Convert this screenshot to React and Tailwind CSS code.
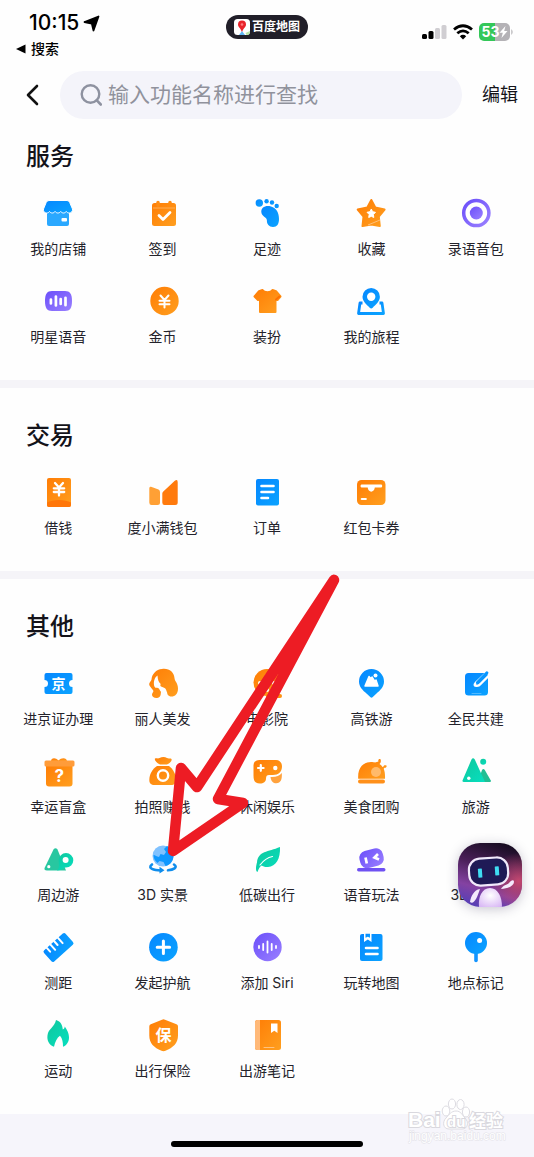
import React, { useState } from 'react'

/* ═══════════════════════════ Icons ═══════════════════════════ */
/* every drawing lives on a 32x32 grid and shares four gradients */
const OR = 'url(#gOrange)'
const BL = 'url(#gBlue)'
const PU = 'url(#gPurple)'
const GR = 'url(#gGreen)'

const line = { fill: 'none', strokeLinecap: 'round', strokeLinejoin: 'round' }

function Gradients() {
  const stops = [
    ['gOrange', '#ff7d05', '#ff9f1f'],
    ['gBlue', '#0587ff', '#0ba3ff'],
    ['gPurple', '#6b4ffa', '#9a80ff'],
    ['gGreen', '#10c79d', '#06dfbf'],
  ]
  return (
    <svg width="0" height="0" className="absolute" aria-hidden="true">
      <defs>
        {stops.map(([id, from, to]) => (
          <linearGradient key={id} id={id} x1="0" y1="0" x2="1" y2="1">
            <stop offset="0" stopColor={from} />
            <stop offset="1" stopColor={to} />
          </linearGradient>
        ))}
      </defs>
    </svg>
  )
}

const Glyph = ({ x, y, size, children }) => (
  <text x={x} y={y} fontSize={size} fontWeight="700" fill="#fff" textAnchor="middle">{children}</text>
)

const icons = {
  store: (
    <>
      <path fill="#2aa8ff" d="M5 14h22v13a2 2 0 0 1-2 2H7a2 2 0 0 1-2-2z" />
      <path fill={BL} stroke="#fff" strokeWidth="1" d="M7 3.500h18q2 0 2.700 2L30.500 12c.5 2.500-1.500 4-3.200 4-1.500 0-2.300-.6-3-1.500-1.600 2-4 2-5.600 0-1.600 2-4 2-5.600 0-1.600 2-4 2-5.600 0-.8 1-1.600 1.500-3 1.500C2.500 16 1 14.500 1.500 12l2.700-6.500q.8-2 2.800-2z" />
      <rect x="19.500" y="21" width="5.500" height="3.500" rx="1" fill="#fff" />
    </>
  ),
  calendar: (
    <>
      <rect x="5" y="6" width="24" height="23" rx="2.500" fill={OR} />
      <path d="M11 5.500v3M23 5.500v3" stroke="#ff8c12" strokeWidth="3.500" {...line} />
      <path d="M6 11h22" stroke="#ffad55" strokeWidth="1" />
      <path d="M12 18.500l4 4 7-7" stroke="#fff" strokeWidth="2.800" {...line} />
    </>
  ),
  foot: (
    <g fill={BL}>
      <circle cx="8.300" cy="6" r="3.700" />
      <circle cx="15.600" cy="4.200" r="2.200" />
      <circle cx="21" cy="5.500" r="2.200" />
      <circle cx="25.700" cy="9" r="2.200" />
      <path d="M10.300 15C10 10.500 14.500 8 20 9.500S28 16 28 22c0 5-2 8-6 8s-6.300-3-6.100-6.500C16 20 10.500 19.500 10.300 15z" />
    </g>
  ),
  star: (
    <>
      <path fill={OR} stroke={OR} strokeWidth="2" strokeLinejoin="round" d="M16.300 3l4 7.500 9.300 2-5.800 7 1 9.500-8.500-1.500L7.500 29l1-9.500-5.800-7 9.600-2z" />
      <path d="M13 28l12-5" stroke="#ffc07a" strokeWidth="1" />
      <path fill="#fff" stroke="#fff" strokeLinejoin="round" d="M16.300 12l1.300 2.700 2.900.6-2.100 2.200.4 3-2.500-1.200-2.600 1.200.5-3-2.200-2.200 3-.6z" />
    </>
  ),
  record: (
    <>
      <circle cx="16.300" cy="16" r="12.600" fill="none" stroke={PU} strokeWidth="3.500" />
      <circle cx="16.300" cy="16" r="6.500" fill={PU} />
    </>
  ),
  voice: (
    <>
      <path fill={PU} d="M10 6h13c5 0 7 3 7 10s-2 10-7 10H10c-5 0-7-3-7-10S5 6 10 6z" />
      <path d="M8.900 14.500v4M13.900 11.500v9M18.700 14v5M23.500 12.800v7.400" stroke="#fff" strokeWidth="2.700" {...line} />
    </>
  ),
  coin: (
    <>
      <circle cx="17.500" cy="16" r="14.200" fill={OR} />
      <path d="M13.500 10.500l4 4.500 4-4.500M12.500 15.800h10M12.500 19.300h10M17.500 15v7.500" stroke="#fff" strokeWidth="2" {...line} />
    </>
  ),
  shirt: (
    <>
      <path fill={OR} stroke={OR} strokeWidth="2" strokeLinejoin="round" d="M11.500 5c1.500 3 8.500 3 10 0l3.500 1.200 4.500 5.300-3 3.500-2-1V27H9V14l-2 1-3.500-3.500L8 6.200z" />
      <path d="M25 14.500l3.500-3" stroke="#ff6f00" strokeWidth="2" {...line} />
    </>
  ),
  trip: (
    <>
      <path fill="none" stroke={BL} strokeWidth="2.800" strokeLinejoin="round" d="M7.500 18H5L3.500 28.500h25L27 18h-2.500" />
      <path fill={BL} d="M16.200 3a8.700 8.700 0 0 0-8.700 8.700c0 4.800 4.500 8 7.200 11q1.500 1.500 3 0c2.700-3 7.200-6.200 7.200-11A8.700 8.700 0 0 0 16.200 3z" />
      <circle cx="16.200" cy="11.700" r="4.200" fill="#fff" />
    </>
  ),
  loan: (
    <>
      <rect x="5" y="2" width="24" height="29" rx="2" fill={OR} />
      <path fill="#ff7608" d="M5 26.500c6-3.500 18-3.500 24 0V29a2 2 0 0 1-2 2H7a2 2 0 0 1-2-2z" />
      <path d="M13 7l4 4.500L21 7M11.800 12.300h10.400M11.800 16h10.400M17 11.500v8" stroke="#fff" strokeWidth="2.300" {...line} />
    </>
  ),
  wallet: (
    <>
      <path fill="#ffa035" d="M4 10.800l7.500 2.700Q13 14 13 16v10.500q0 2.500-2.500 2.500h-6Q2.300 29 2.300 26.500V12.300Q2.300 10.300 4 10.800z" />
      <path fill="#ff7a0d" d="M16.300 15.500L27.800 4.700q2.900-1.900 2.900 1.500v20.300q0 2.500-2.500 2.500H17.500q-2.200 0-2.200-2.500v-9q0-1.200 1-2z" />
    </>
  ),
  order: (
    <>
      <rect x="5" y="3" width="23" height="26.500" rx="2" fill={BL} />
      <path d="M10.500 10h12M10.500 16h12M10.500 22h6.500" stroke="#fff" strokeWidth="2.600" {...line} />
    </>
  ),
  coupon: (
    <>
      <rect x="2" y="4" width="28.500" height="25" rx="4.500" fill={OR} />
      <path fill="#fff" d="M6.500 8.500h19.800c1.200 0 1.200 3 0 3h-6.500c-.4 5.500-6.700 5.500-7.100 0H6.500c-1.200 0-1.200-3 0-3z" />
      <path d="M6.800 23h4" stroke="#fff" strokeWidth="2.200" {...line} />
    </>
  ),
  ticket: (
    <>
      <path fill={BL} d="M4.500 6h24q2 0 2 2v5a3.500 3.500 0 0 0 0 7v5q0 2-2 2h-24q-2 0-2-2v-5a3.500 3.500 0 0 0 0-7V8q0-2 2-2z" />
      <Glyph x="16.500" y="21.500" size="14">京</Glyph>
    </>
  ),
  hair: (
    <>
      <path fill={OR} d="M15 2c7-1 12 3 12.500 9 0 3 3.500 5 3.500 10.500 0 5.500-3 8-6.500 8-3.500 0-4.500-2.500-4.500-5-2 2-4 1-6 0-.3 4-.5 6-4 6.500-3 .2-5-1.500-5-3.300 0-1.500 1-2 1.500-3.700C5 21 2.200 19.500 2.200 17c0-1.500 2-3 2.300-4.500C5 7 9 2.500 15 2z" />
      <path fill="#fff" d="M10.500 8.500c-2.500 1.500-4 5-3.500 9.500.3 2 1.200 3 2.500 2.800 1 0 2 .2 2.500 1 .8 1.500 1.500 3 3.500 4l4.500 1.500c-.2-4-1-6.500-4.800-7.300-2-.3-2.200-1.500-1.500-3-2-1.500-3-4.500-3.200-8.500z" />
    </>
  ),
  cinema: (
    <>
      <circle cx="16" cy="15.500" r="13.500" fill={OR} />
      <path d="M17 29h12" stroke="#ff920f" strokeWidth="4" {...line} />
      <g fill="#fff">
        <circle cx="16" cy="9" r="2" />
        <circle cx="9" cy="16" r="2" />
        <circle cx="23" cy="16" r="2" />
        <circle cx="16" cy="23" r="2" />
      </g>
    </>
  ),
  railPin: (
    <>
      <path fill={BL} d="M16.400 2A12.500 12.500 0 0 0 4 14.500c0 5.500 4 9 7.500 12l4 3.800q1 .9 2 0l4-3.800c3.500-3 7.500-6.500 7.500-12A12.500 12.500 0 0 0 16.400 2z" />
      <path fill="#fff" stroke="#fff" strokeWidth="1.500" strokeLinejoin="round" d="M10 19l4-9.500 2 2.300 1-1.800 2.500 4 1.500-1 2 6z" />
      <circle cx="20.500" cy="8.500" r="2" fill="#fff" />
    </>
  ),
  edit: (
    <>
      <path fill={BL} d="M8.500 6h16q3.500 0 3.500 3.500V25q0 3.500-3.500 3.500h-16Q5 28.500 5 25V9.500Q5 6 8.500 6z" />
      <path d="M25 7l-9 8.500q-3 3.500 1 3.300 2 0 3.500-1.800L28.500 9" stroke="#fff" strokeWidth="2.400" {...line} />
      <path d="M26.800 6L17.500 15.500" stroke="#0796ff" strokeWidth="3.200" {...line} />
      <path d="M12 26.500h9" stroke="#50b9ff" strokeWidth="1" {...line} />
    </>
  ),
  gift: (
    <>
      <path fill={OR} d="M9 6.500C9 3 13 2 16.500 5.500 20 2 25 3 25 6.500z" />
      <path fill={OR} d="M4 10h26.500v18.500q0 3-3 3H7q-3 0-3-3z" />
      <rect x="2.500" y="5.500" width="30" height="6" rx="1.500" fill="#ff9c3a" />
      <Glyph x="17.300" y="27" size="17">?</Glyph>
    </>
  ),
  moneyBag: (
    <>
      <path fill={OR} d="M8 3.500c2-.5 3 .5 4.500-.5C15 1.500 18 1.500 20 3c1.500 1 3.500-.2 4.500 1 .8 1.800-2 4.500-4.500 5.500h-7C10.500 8.500 7 5.500 8 3.500z" />
      <path fill={OR} d="M10 11h12c4 3 7 8 7 14 0 3.500-1.500 5-5 5H7.500C4 30 2.300 28.500 2.300 25c0-6 3.200-11 7.700-14z" />
      <circle cx="16" cy="20.500" r="5.200" fill="none" stroke="#fff" strokeWidth="2.400" />
    </>
  ),
  gamepad: (
    <>
      <path fill={OR} d="M8.500 5H25c4 0 6 3 6 6.500 0 5-3.500 8.500-9 8.500h-4c-2 0-3 1-3 3.500 0 3.500-2.500 5-6 5-5 0-6.500-2.500-6.500-8v-10C2.500 7 5 5 8.500 5z" />
      <path fill="#ffa23d" d="M30.800 18c.5 6-1 10.300-5.500 10.300-3 0-5.300-2-5.800-6.300 5.500.3 9-1 11.300-4z" />
      <path d="M9.800 10.200v5.600M7 13h5.600" stroke="#fff" strokeWidth="2.200" {...line} />
      <circle cx="24.300" cy="13" r="2.200" fill="#fff" />
    </>
  ),
  chicken: (
    <>
      <path fill={OR} d="M3.200 23.800C2.500 13 8 7 16 7c1.800 0 3 .2 4 .5l3.500-1c-.8-1.500.5-3 2-2.200.5 1.500.5 2 0 3.500L24.500 9c1.200.8 2.300 1.800 3 3l1-.6c.3-1.200 1.500-1.500 3-.8.5 1.500-.5 2.500-2 2.200l-.8 1c1 2.500 1.500 5.500 1.300 10z" />
      <circle cx="21" cy="17" r="5" fill="#ffba6b" />
      <rect x="3" y="24.600" width="27" height="4" rx="2" fill="#ff901a" />
    </>
  ),
  mountains: (
    <>
      <path fill="#20bf94" d="M18 27l4-12q1.300-2.200 2.800 0l6 10.500q.5 1.500-1 1.500z" />
      <path fill={GR} d="M4 27q-2.200 0-1.300-2L11.500 4.500q1.500-2.300 3.300 0L25 27z" />
      <circle cx="23.200" cy="6.700" r="3" fill={GR} />
      <circle cx="8.800" cy="23.200" r="1.700" fill="#fff" />
    </>
  ),
  nearby: (
    <>
      <path fill="#28c7a0" d="M5 27.500q-3.500 0-2.200-3L11.500 6.500q2-2.700 4 0L24 27.500z" />
      <path fill={GR} d="M24 10a7.300 7.300 0 0 1 0 14.600c-3 0-4 2.900-9 2.900 3-3 1.700-6 1.700-10.200A7.300 7.300 0 0 1 24 10z" />
      <circle cx="23.600" cy="17" r="3" fill="#fff" />
      <circle cx="6.800" cy="23.700" r="1.600" fill="#fff" />
    </>
  ),
  globe: (
    <>
      <circle cx="16" cy="13" r="10.500" fill="#80c2ff" />
      <path fill="#0f98ff" d="M6.500 12c2 .3 3 1.500 5.500 2l1.500-3 3.500 1 2-3-2-3 3-3c4 2 6.500 5.500 6.500 10 0 5-3.500 9-8 10l-2-4-4-1-2 2c-2.500-2-4-5-4-8z" />
      <path d="M5 21.500c-5 4 2 5.800 9 6M27 21.500c4.500 3-1 5.500-6 5.800" stroke="#0f8dec" strokeWidth="2.600" {...line} />
      <path d="M12.500 23.800l5 3.400-5 3.300z" fill="#0f8dec" />
    </>
  ),
  leaf: (
    <>
      <path fill={GR} d="M29 4c.5 12-4 19.500-12 20-3 .2-5-.5-6.500-1.500C8.500 24 7.500 26 6.500 29 4 28 5.200 22 6 19.500 7 8 17 9 29 4z" />
      <path d="M9 22c3-4 7.500-7.500 12.500-8.500" stroke="#fff" strokeWidth="1.200" {...line} />
    </>
  ),
  robotVoice: (
    <>
      <rect x="4.500" y="6.500" width="24" height="17.500" rx="7" fill={PU} transform="rotate(-14 16.500 15)" />
      <path d="M10.500 14.500l1.300 6M23 11l-3.500 3.500 4.500 2" stroke="#fff" strokeWidth="2.700" fill="none" />
      <rect x="2" y="25" width="28.500" height="3.500" rx="1.700" fill="#6f51f2" />
    </>
  ),
  compass: (
    <>
      <circle cx="16" cy="16" r="14" fill={BL} />
      <path d="M22 10l-4 8-8 4 4-8z" fill="#fff" />
    </>
  ),
  ruler: (
    <g transform="rotate(-42 16.500 16.500)">
      <rect x="2" y="9" width="29" height="15" rx="2" fill={BL} />
      <path d="M7.500 9v5M12.500 9v7M17.500 9v5M22.500 9v7" stroke="#fff" strokeWidth="2" {...line} />
    </g>
  ),
  plus: (
    <>
      <circle cx="16.400" cy="16.200" r="14.300" fill={BL} />
      <path d="M16.400 10v12.400M10.200 16.200h12.400" stroke="#fff" strokeWidth="3" {...line} />
    </>
  ),
  siri: (
    <>
      <circle cx="16.500" cy="16" r="14.200" fill={PU} />
      <path d="M8 15v2M12.200 13v6M16.500 10.500v11M20.700 13v6M25 15v2" stroke="#fff" strokeWidth="1.800" {...line} />
    </>
  ),
  book: (
    <>
      <rect x="5" y="3" width="22.500" height="27" rx="2" fill={BL} />
      <path fill="#fff" d="M9 2.500h7.500V11l-3.700-2.500L9 11z" />
      <path d="M11 17h11.500M11 23h11.500" stroke="#fff" strokeWidth="2.600" {...line} />
      <path fill={BL} d="M10.500 2.800h4.500v4l-2.200-1-2.300 1z" />
    </>
  ),
  pin: (
    <>
      <path d="M16 20v9.500" stroke="#1394ff" strokeWidth="3.600" {...line} />
      <circle cx="16" cy="12" r="11" fill={BL} />
      <circle cx="19.600" cy="9.400" r="2.500" fill="#fff" />
    </>
  ),
  fire: (
    <path fill={GR} d="M14 1c5 1.500 6.500 5.500 6.800 9.500 1.200-.5 1.800-1.500 2-3 1.500 2.500 4.200 6 4.200 11 0 4.500-2.500 8-6 9.200 0-4.500-.5-8-3-11-3 2-5 6-6 11-5-2-7.200-6-6.500-11.500C6.300 9.500 12.500 8.500 14 1z" />
  ),
  shield: (
    <>
      <path fill={OR} d="M15 .7q1.500-.7 3 0l11.500 4.500Q31 5.800 31 7.500v9c0 8-5 12-12.500 15.300q-2 .8-4 0C7 28.500 2.300 24.500 2.300 16.500v-9q0-1.700 1.500-2.300z" />
      <Glyph x="16.600" y="22" size="16">保</Glyph>
    </>
  ),
  notes: (
    <>
      <rect x="4" y="1" width="26" height="30" rx="2.500" fill={OR} />
      <path fill="#ffb979" d="M6.500 1H9v30H6.500Q4 31 4 28.500v-25Q4 1 6.500 1z" />
      <path fill="#fff" d="M20 4.500h6.500v9.500l-3.200-2.300L20 14z" />
      <path d="M13 28.500h10" stroke="#ffc27f" strokeWidth="1" {...line} />
    </>
  ),
}

/* ═══════════════════════════ Data ═══════════════════════════ */
const sections = [
  {
    title: '服务',
    items: [
      ['store', '我的店铺'], ['calendar', '签到'], ['foot', '足迹'], ['star', '收藏'], ['record', '录语音包'],
      ['voice', '明星语音'], ['coin', '金币'], ['shirt', '装扮'], ['trip', '我的旅程'],
    ],
  },
  {
    title: '交易',
    items: [['loan', '借钱'], ['wallet', '度小满钱包'], ['order', '订单'], ['coupon', '红包卡券']],
  },
  {
    title: '其他',
    items: [
      ['ticket', '进京证办理'], ['hair', '丽人美发'], ['cinema', '电影院'], ['railPin', '高铁游'], ['edit', '全民共建'],
      ['gift', '幸运盲盒'], ['moneyBag', '拍照赚钱'], ['gamepad', '休闲娱乐'], ['chicken', '美食团购'], ['mountains', '旅游'],
      ['nearby', '周边游'], ['globe', '3D 实景'], ['leaf', '低碳出行'], ['robotVoice', '语音玩法'], ['compass', '3D 罗盘'],
      ['ruler', '测距'], ['plus', '发起护航'], ['siri', '添加 Siri'], ['book', '玩转地图'], ['pin', '地点标记'],
      ['fire', '运动'], ['shield', '出行保险'], ['notes', '出游笔记'],
    ],
  },
]

/* ═══════════════════════════ Status bar ═══════════════════════════ */
function StatusBar() {
  return (
    <div className="grid grid-cols-3 items-start pt-[11px]">
      <div className="flex flex-col items-start">
        <div className="flex items-center gap-1 pl-[29px] text-[21px] leading-6 font-medium">
          10:15
          <svg width="17" height="17" viewBox="0 0 17 17" aria-hidden="true">
            <path d="M15.500 1.500L10.500 15.500 8.800 8.500 1.500 7z" fill="#000" stroke="#000" strokeWidth="1.800" strokeLinejoin="round" />
          </svg>
        </div>
        <a href="#search" className="mt-[5px] flex items-center gap-[5px] pl-4 text-sm leading-[18px] font-medium">
          <svg width="10" height="10" viewBox="0 0 10 10" aria-hidden="true">
            <path d="M0 5L9.500.5v9z" />
          </svg>
          搜索
        </a>
      </div>

      <div className="mt-1 flex h-6 items-center justify-center gap-0.5 justify-self-center rounded-full bg-[#211f29] pr-2 pl-2 text-xs font-bold whitespace-nowrap text-white">
        <svg width="16" height="16" viewBox="0 0 16 16" aria-hidden="true">
          <rect width="16" height="16" rx="3.500" fill="#fff" />
          <path d="M5 16l3-4 3 4z" fill="#5db7f5" />
          <path d="M11.500 14L16 12v.5a3.500 3.500 0 0 1-3.500 3.500z" fill="#b7e6a4" />
          <path d="M8 1.500a4 4 0 0 1 4 4c0 2.500-2.500 3.500-4 7.500-1.500-4-4-5-4-7.500a4 4 0 0 1 4-4z" fill="#e8242c" />
          <circle cx="8" cy="5.500" r="1.300" fill="#ff7c80" />
        </svg>
        百度地图
      </div>

      <div className="mt-3 flex items-center gap-[6px] justify-self-end pr-5">
        <svg width="25" height="16" viewBox="0 0 25 16" role="img" aria-label="信号">
          <rect x="0" y="10" width="5" height="5" rx="1.500" />
          <rect x="6.500" y="7" width="5" height="8" rx="1.500" />
          <rect x="13" y="4" width="5" height="11" rx="1.500" fill="#d0ced2" />
          <rect x="19.500" y="1" width="5" height="14" rx="1.500" fill="#d0ced2" />
        </svg>
        <svg width="20" height="16" viewBox="0 0 20 16" role="img" aria-label="Wi-Fi">
          <path d="M1 5.500q9-7.500 18 0M4.300 9.300q5.700-4.800 11.400 0" fill="none" stroke="#000" strokeWidth="2.800" />
          <path d="M10 15.500l-3.200-3.300q3.200-2.700 6.400 0z" />
        </svg>
        <svg width="35" height="18" viewBox="0 0 35 18" role="img" aria-label="电量">
          <path d="M5 0h11v18H5a5 5 0 0 1-5-5V5a5 5 0 0 1 5-5z" fill="#34c759" />
          <path d="M16 0h10a5 5 0 0 1 5 5v8a5 5 0 0 1-5 5H16z" fill="#b4b2b6" />
          <path d="M32.300 6q2.700 3 0 6z" fill="#b4b2b6" />
          <text x="11.500" y="14.300" fontSize="14" fontWeight="700" fill="#fff" textAnchor="middle">53</text>
          <path d="M26.500 3l-6 6.800h3.300l-1.300 5.200 6-7h-3.300z" fill="#fff" />
        </svg>
      </div>
    </div>
  )
}

/* ═══════════════════════════ Tiles ═══════════════════════════ */
function Tile({ icon, label }) {
  return (
    <button type="button" className="flex cursor-pointer flex-col items-center gap-2.5">
      <svg className="h-8 w-8 overflow-visible" viewBox="0 0 32 32" aria-hidden="true">{icons[icon]}</svg>
      <span className="text-sm leading-5 whitespace-nowrap text-[#24232b]">{label}</span>
    </button>
  )
}

function Section({ title, items, first }) {
  return (
    <section className={`pb-[33px] ${first ? 'pt-[22px]' : 'border-t-8 border-[#f5f4f8] pt-8'}`}>
      <h2 className="pl-[26px] text-2xl leading-8 font-medium text-[#14131a]">{title}</h2>
      <div className="mt-6 grid grid-cols-5 gap-y-[26px] px-1.5">
        {items.map(([icon, label]) => <Tile key={label} icon={icon} label={label} />)}
      </div>
    </section>
  )
}

/* ═══════════════════════════ Overlays ═══════════════════════════ */
function AssistantButton() {
  return (
    <button
      type="button"
      aria-label="语音助手"
      className="absolute top-[843px] right-3 h-16 w-16 cursor-pointer overflow-hidden rounded-[22px] shadow-[0_2px_12px_rgba(40,30,70,0.25)]"
    >
      <svg viewBox="0 0 64 64" aria-hidden="true">
        <defs>
          <linearGradient id="botSky" x1="0.700" y1="0" x2="0.400" y2="1">
            <stop offset="0" stopColor="#160c20" />
            <stop offset="0.400" stopColor="#4a1f58" />
            <stop offset="0.750" stopColor="#8442a2" />
            <stop offset="1" stopColor="#5b3fb4" />
          </linearGradient>
          <radialGradient id="botGlow" cx="0.950" cy="0.600" r="0.450">
            <stop offset="0" stopColor="#c4486f" />
            <stop offset="1" stopColor="#c4486f" stopOpacity="0" />
          </radialGradient>
          <radialGradient id="botBody" cx="0.500" cy="0.400" r="0.700">
            <stop offset="0" stopColor="#fff" />
            <stop offset="1" stopColor="#d9b8f5" />
          </radialGradient>
        </defs>
        <rect width="64" height="64" fill="url(#botSky)" />
        <rect width="64" height="64" fill="url(#botGlow)" />
        <path d="M21 64c-1-10 3-19 11-19s12 9 12 19z" fill="url(#botBody)" />
        <path d="M22 46c-6 1-9 7-10 13 4 3 7-4 10-13zM43 46c2-4 6-4 8-6 2-3 5-4 5-1 0 4-7 7-13 7z" fill="#f4eafc" />
        <g transform="rotate(-4 31 28)">
          <rect x="11" y="15" width="39" height="27" rx="11" fill="#1f1a56" stroke="#f1e9fb" strokeWidth="2.200" />
          <rect x="20" y="25" width="4" height="9" rx="0.500" fill="#3fdcf2" />
          <rect x="37" y="24" width="4" height="9" rx="0.500" fill="#3fdcf2" />
        </g>
      </svg>
    </button>
  )
}

function Arrow() {
  return (
    <svg
      className="pointer-events-none absolute top-[570px] left-[160px]"
      width="190"
      height="300"
      viewBox="160 570 190 300"
      aria-hidden="true"
    >
      <path d="M334 580L197 787l-16-19-8 83 70-48-25-4z" fill="none" stroke="#ed1c24" strokeWidth="10.500" strokeLinejoin="round" />
    </svg>
  )
}

function Watermark() {
  return (
    <svg
      className="pointer-events-none absolute right-[30px] bottom-3 overflow-visible font-['Liberation_Sans','Noto_Sans_CJK_SC',sans-serif]"
      width="96"
      height="48"
      viewBox="0 0 96 48"
      aria-hidden="true"
    >
      <g fill="#fff" stroke="#dddce2" strokeWidth="1">
        <ellipse cx="38" cy="14" rx="3.800" ry="5" />
        <ellipse cx="44" cy="7" rx="3.600" ry="5" />
        <ellipse cx="52.500" cy="7.500" rx="3.600" ry="5" />
        <ellipse cx="58" cy="15" rx="3.600" ry="5" />
        <path d="M48 14c5 0 6 4 9 7 4 4 3 11-3 11H41c-6 0-7-7-3-11 3-3 5-7 10-7z" />
      </g>
      <g fill="#fff" stroke="#d9d8de" strokeWidth="2" paintOrder="stroke" fontWeight="700">
        <text x="0" y="30" fontSize="21">Bai</text>
        <text x="39" y="30" fontSize="15">du</text>
        <text x="61" y="30" fontSize="17">经验</text>
      </g>
      <text x="1" y="43" fontSize="12" fill="#fff" stroke="#e2e1e7" strokeWidth="1" paintOrder="stroke">jingyan.baidu.com</text>
    </svg>
  )
}

/* ═══════════════════════════ Page ═══════════════════════════ */
export default function App() {
  const [query, setQuery] = useState('')

  return (
    <div className="relative overflow-hidden bg-[#fefefe] font-[Inter,'Noto_Sans_CJK_SC',sans-serif] text-black">
      <Gradients />

      <header>
        <StatusBar />
        <div className="mt-[13px] flex items-center">
          <button type="button" aria-label="返回" className="flex w-[60px] cursor-pointer justify-center pl-1">
            <svg width="14" height="22" viewBox="0 0 14 22" aria-hidden="true">
              <path d="M12 2L3 11l9 9" stroke="#111" strokeWidth="2.600" {...line} />
            </svg>
          </button>
          <label className="flex h-12 min-w-0 flex-1 items-center gap-1.5 rounded-full bg-[#f4f4fa] px-5">
            <svg className="shrink-0" width="22" height="22" viewBox="0 0 22 22" aria-hidden="true">
              <circle cx="10.500" cy="10" r="8.800" fill="none" stroke="#8e92a0" strokeWidth="2.400" />
              <path d="M16.800 16.300l4 4.200" stroke="#8e92a0" strokeWidth="2.600" {...line} />
            </svg>
            <input
              type="text"
              value={query}
              onChange={(e) => setQuery(e.target.value)}
              aria-label="搜索功能"
              placeholder="输入功能名称进行查找"
              className="min-w-0 flex-1 bg-transparent text-[21px] leading-8 outline-none placeholder:text-[#90929c]"
            />
          </label>
          <button type="button" className="ml-5 mr-4 cursor-pointer text-lg leading-6 text-[#14131a]">编辑</button>
        </div>
      </header>

      <main>
        {sections.map((s, i) => <Section key={s.title} title={s.title} items={s.items} first={i === 0} />)}
      </main>

      <footer className="flex justify-center bg-[#f6f5fb] pt-[27px] pb-2.5">
        <div className="h-1.5 w-48 rounded-full bg-black" />
      </footer>

      <AssistantButton />
      <Arrow />
      <Watermark />
    </div>
  )
}
